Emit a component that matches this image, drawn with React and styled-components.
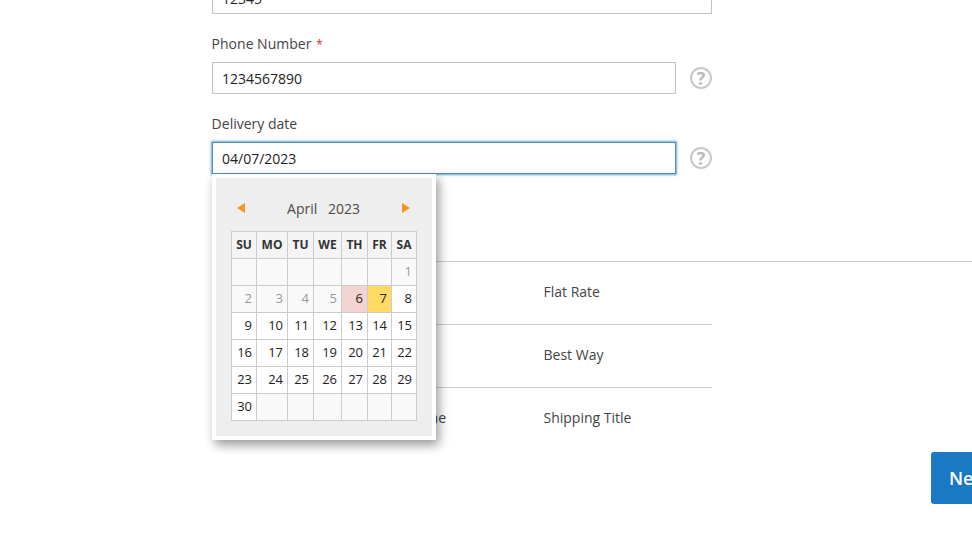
import React from "react";
import styled, { createGlobalStyle } from "styled-components";

const Global = createGlobalStyle`
  html, body { margin: 0; padding: 0; background: #fff; }
  body { font-family: "Open Sans", "Liberation Sans", sans-serif; font-size: 14px; color: #333; }
`;

const Viewport = styled.div`
  width: 972px;
  height: 536px;
  overflow: hidden;
`;
const Page = styled.main`
  margin-top: -18px;
  padding-left: 212px;
  display: flex;
  flex-direction: column;
`;
const Form = styled.form`
  width: 500px;
  display: flex;
  flex-direction: column;
  gap: 20px;
`;
const Field = styled.div`
  position: relative;
  display: flex;
  flex-direction: column;
  gap: 8px;
`;
const Label = styled.label`
  line-height: 20px;
  height: 20px;
  color: #444;
  font-size: 14px;
  margin-left: -0.4px;
`;
const Star = styled.span`
  color: #e02b27;
  font-size: 12px;
  margin-left: 5px;
`;
const Control = styled.div`
  display: flex;
  align-items: center;
  gap: 14px;
`;
const Input = styled.div`
  box-sizing: border-box;
  height: 32px;
  width: ${(p) => (p.$wide ? "500px" : "464px")};
  padding: 1px 9px 0 9px;
  font-size: 14px;
  line-height: 30px;
  color: #222;
  background: #fff;
  border: 1px solid ${(p) => (p.$focus ? "#4f8fbd" : "#c2c2c2")};
  box-shadow: ${(p) => (p.$focus ? "0 0 2px 1px #6aa6cc" : "none")};
`;
const Help = styled.span`
  box-sizing: border-box;
  width: 22px;
  height: 22px;
  border: 2px solid #c8c8c8;
  border-radius: 50%;
  color: #bbb;
  font-size: 18px;
  font-weight: 700;
  line-height: 18px;
  text-align: center;
  flex: none;
`;

const Popup = styled.div`
  position: absolute;
  z-index: 5;
  left: 0;
  top: 60px;
  box-sizing: border-box;
  width: 224px;
  height: 266px;
  background: #eee;
  border: 4px solid #fff;
  box-shadow: 3px 5px 10px rgba(0, 0, 0, 0.4);
  padding: 0 15px;
`;
const CalHead = styled.div`
  display: flex;
  align-items: center;
  justify-content: space-between;
  height: 53px;
  padding: 8px 7px 0 6px;
  box-sizing: border-box;
  color: #514943;
  font-size: 14px;
`;
const Arrow = styled.span`
  width: 0;
  height: 0;
  border-top: 5px solid transparent;
  border-bottom: 5px solid transparent;
  border-${(p) => (p.$dir === "left" ? "right" : "left")}: 8px solid #f7931e;
  margin-top: -2px;
`;
const Title = styled.span`
  word-spacing: 7px;
`;
const Cal = styled.table`
  border-collapse: collapse;
  table-layout: fixed;
  width: 186px;
  font-size: 13px;
`;
const HeadCell = styled.th`
  box-sizing: border-box;
  height: 27px;
  padding: 0 0 1px 0;
  border: 1px solid #ccc;
  background: #f4f4f4;
  color: #333;
  font-size: 12px;
  font-weight: 700;
  text-align: center;
`;
const dayBg = { past: "#f9f9f9", empty: "#f9f9f9", today: "#f3d4d0", selected: "#ffdb63", day: "#fff" };
const Day = styled.td`
  box-sizing: border-box;
  height: 27px;
  padding: 0 4px 2px 0;
  border: 1px solid #ccc;
  text-align: right;
  background: ${(p) => dayBg[p.$kind]};
  color: ${(p) => (p.$kind === "past" ? "#999" : "#222")};
`;

const Rows = styled.div`
  margin-top: 87px;
  width: 760px;
  border-top: 1px solid #ccc;
  display: flex;
  flex-direction: column;
`;
const Row = styled.div`
  width: 500px;
  height: 63px;
  box-sizing: border-box;
  padding-bottom: 4px;
  display: grid;
  grid-template-columns: 80px 251.5px 1fr;
  align-items: center;
  color: #444;
  font-size: 14px;
  border-bottom: 1px solid ${(p) => (p.$last ? "transparent" : "#ccc")};
`;
const Actions = styled.div`
  margin-top: 1px;
  padding-left: 719px;
  display: flex;
`;
const NextButton = styled.button`
  flex: none;
  width: 90px;
  height: 52px;
  padding: 0 0 0 18px;
  border: 0;
  border-radius: 3px;
  background: #1979c3;
  color: #fff;
  font-family: inherit;
  font-size: 18px;
  font-weight: 600;
  text-align: left;
`;

const widths = [25, 31, 26, 28, 26, 24, 25];
const heads = ["SU", "MO", "TU", "WE", "TH", "FR", "SA"];
const weeks = [
  [null, null, null, null, null, null, 1],
  [2, 3, 4, 5, 6, 7, 8],
  [9, 10, 11, 12, 13, 14, 15],
  [16, 17, 18, 19, 20, 21, 22],
  [23, 24, 25, 26, 27, 28, 29],
  [30, null, null, null, null, null, null],
];
const kindOf = (d) => {
  if (d === null) return "empty";
  if (d < 6) return "past";
  if (d === 6) return "today";
  if (d === 7) return "selected";
  return "day";
};

export default function App() {
  return (
    <Viewport>
      <Global />
      <Page>
        <Form>
          <Input $wide>12345</Input>
          <Field>
            <Label>
              Phone Number<Star>*</Star>
            </Label>
            <Control>
              <Input>1234567890</Input>
              <Help>?</Help>
            </Control>
          </Field>
          <Field>
            <Label>Delivery date</Label>
            <Control>
              <Input $focus>04/07/2023</Input>
              <Help>?</Help>
            </Control>
            <Popup>
              <CalHead>
                <Arrow $dir="left" />
                <Title>April 2023</Title>
                <Arrow $dir="right" />
              </CalHead>
              <Cal>
                <colgroup>
                  {widths.map((w, i) => (
                    <col key={i} style={{ width: w }} />
                  ))}
                </colgroup>
                <thead>
                  <tr>
                    {heads.map((h) => (
                      <HeadCell key={h}>{h}</HeadCell>
                    ))}
                  </tr>
                </thead>
                <tbody>
                  {weeks.map((w, i) => (
                    <tr key={i}>
                      {w.map((d, j) => (
                        <Day key={j} $kind={kindOf(d)}>
                          {d}
                        </Day>
                      ))}
                    </tr>
                  ))}
                </tbody>
              </Cal>
            </Popup>
          </Field>
        </Form>
        <Rows>
          <Row>
            <span>$5.00</span>
            <span>Fixed</span>
            <span>Flat Rate</span>
          </Row>
          <Row>
            <span>$0.00</span>
            <span>Table Rate</span>
            <span>Best Way</span>
          </Row>
          <Row $last>
            <span>$10.00</span>
            <span>Shipping Method Name</span>
            <span>Shipping Title</span>
          </Row>
        </Rows>
        <Actions>
          <NextButton type="button">Next</NextButton>
        </Actions>
      </Page>
    </Viewport>
  );
}
